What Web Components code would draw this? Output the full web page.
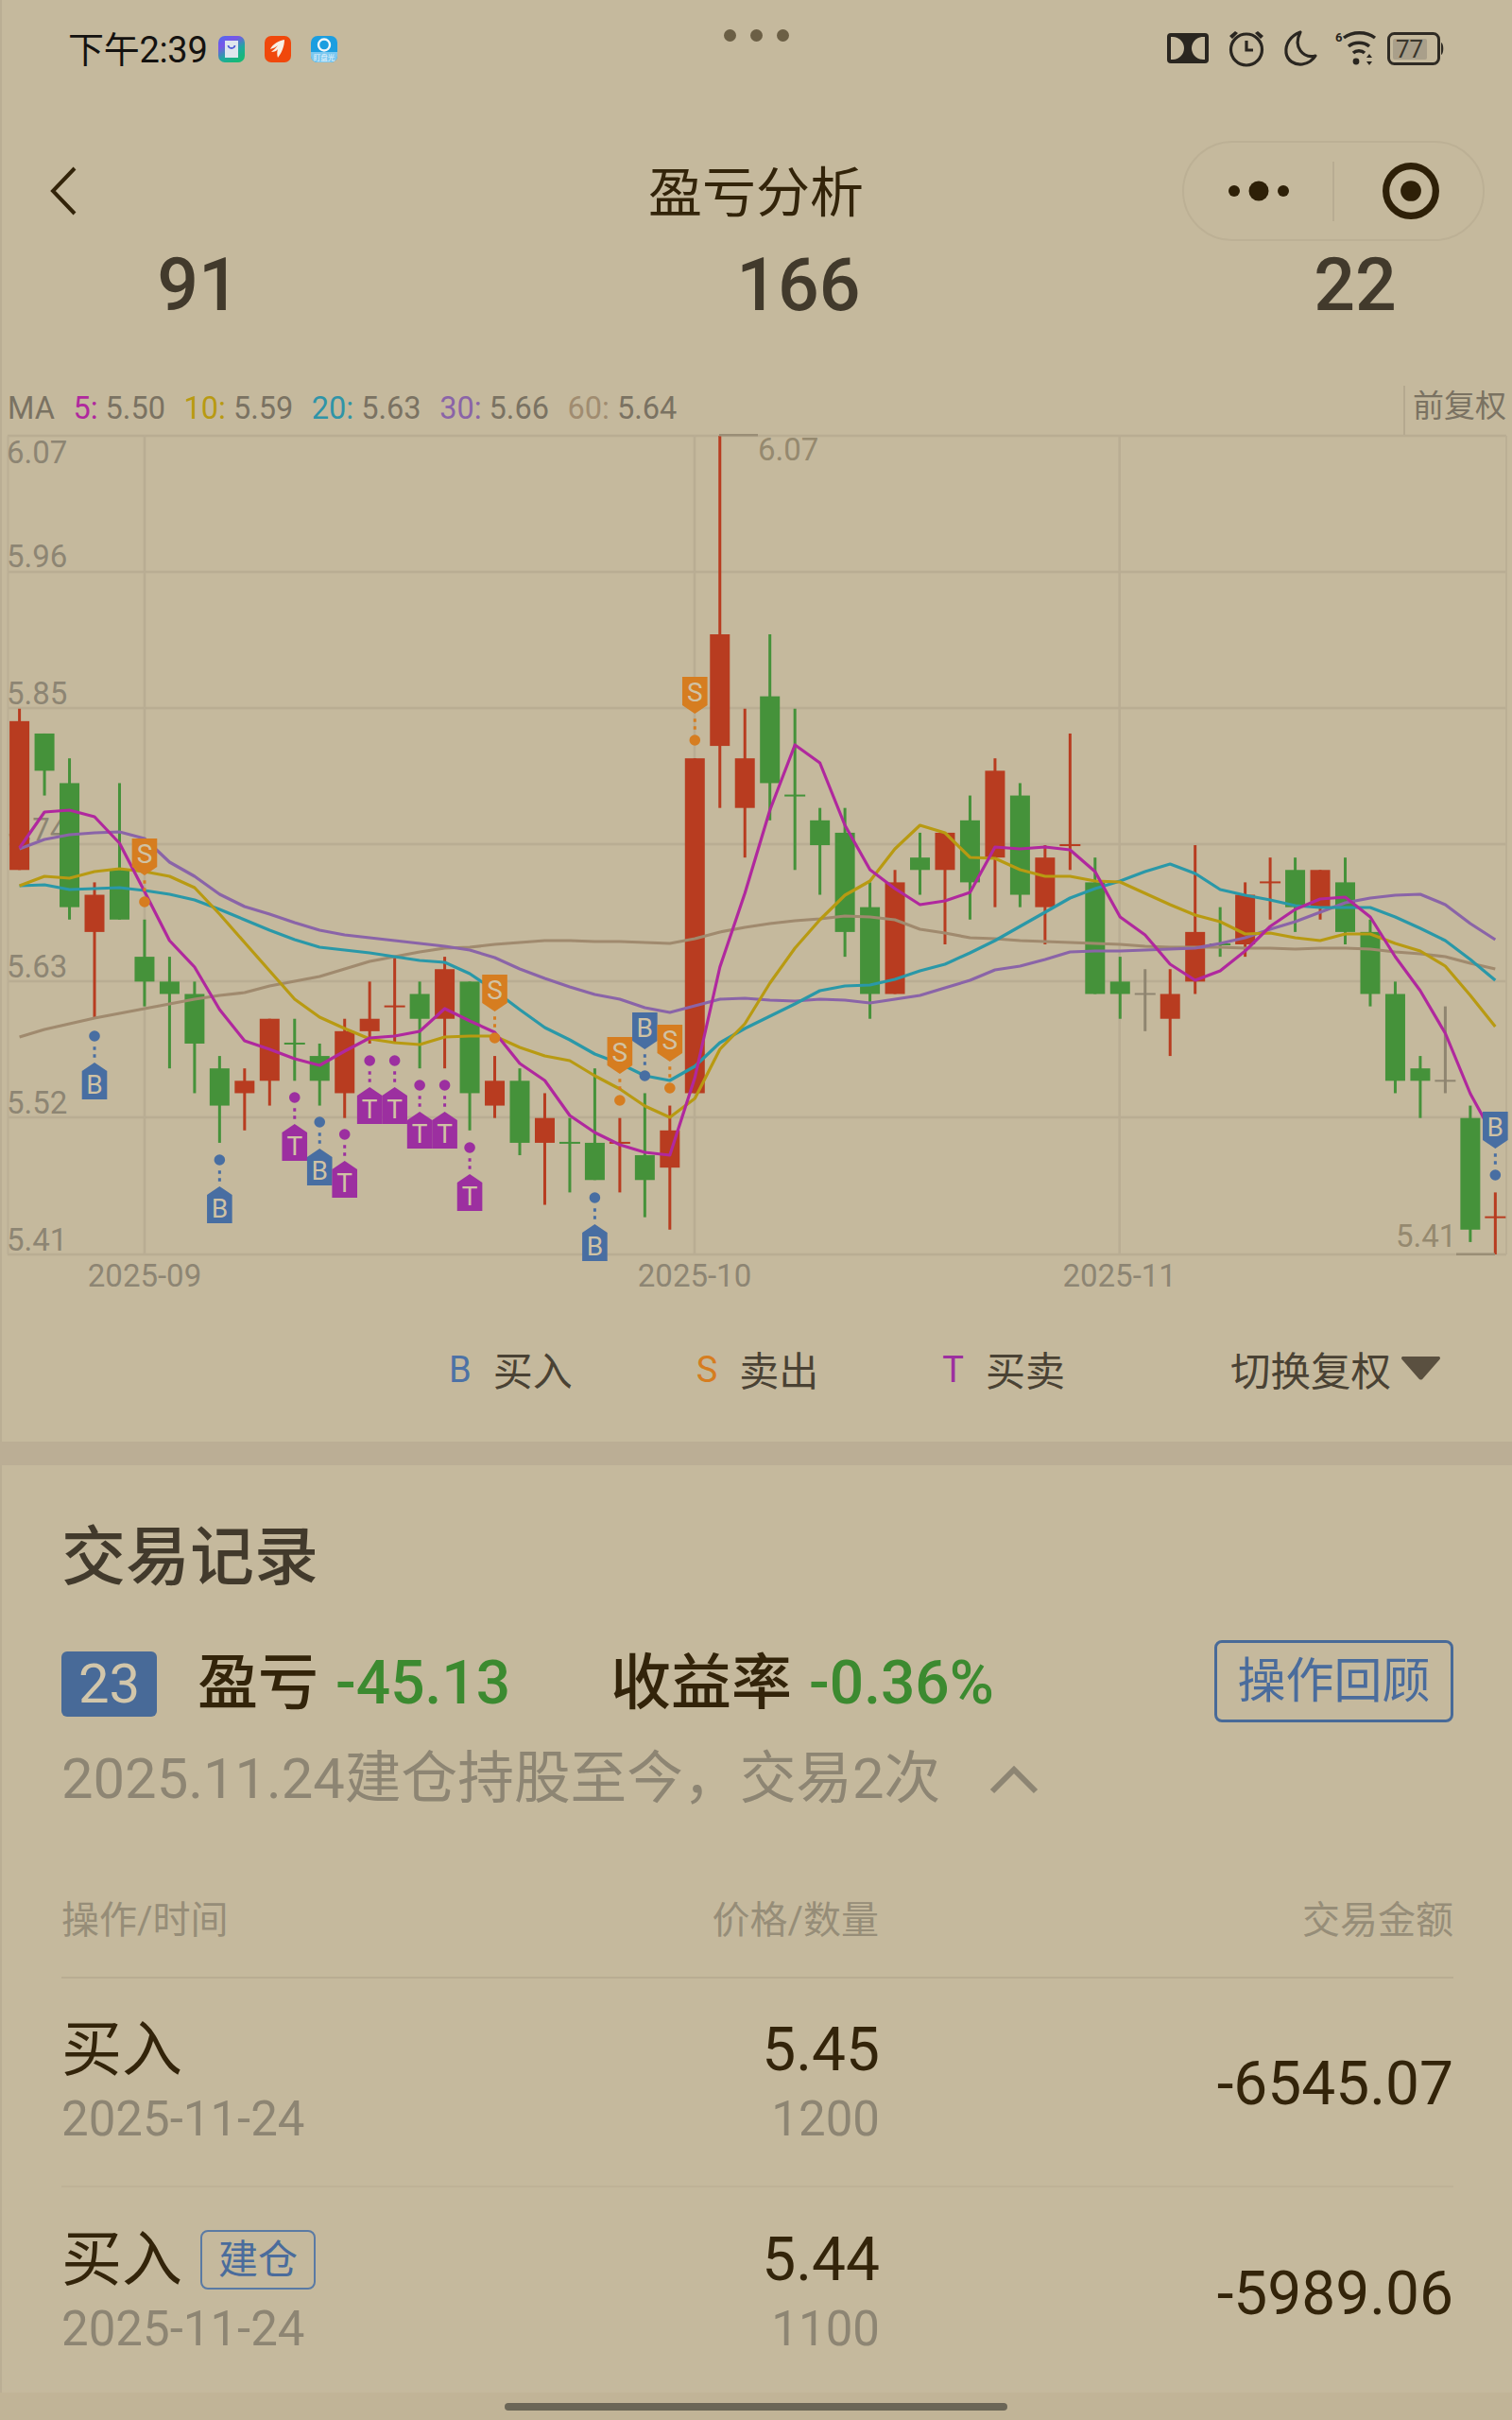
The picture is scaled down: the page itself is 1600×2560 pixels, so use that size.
<!DOCTYPE html>
<html lang="zh-CN">
<head>
<meta charset="utf-8">
<title>盈亏分析</title>
<style>
  html, body { margin: 0; padding: 0; }
  body {
    width: 1600px;
    height: 2560px;
    overflow: hidden;
    background: #c5b99d;
    font-family: Roboto, "Noto Sans CJK SC", sans-serif;
    box-shadow: inset 2px 0 0 #baae94;
  }
</style>
</head>
<body>
<status-bar></status-bar>
<nav-bar>盈亏分析</nav-bar>
<stat-row></stat-row>
<ma-legend></ma-legend>
<kline-chart></kline-chart>
<chart-legend>
  <legend-item letter="B" color="#4d72a6">买入</legend-item>
  <legend-item letter="S" color="#d67d20">卖出</legend-item>
  <legend-item letter="T" color="#9c2fa0">买卖</legend-item>
</chart-legend>
<trade-panel>
  <trade-row op="买入" date="2025-11-24" price="5.45" qty="1200" amount="-6545.07"></trade-row>
  <trade-row op="买入" tag="建仓" date="2025-11-24" price="5.44" qty="1100" amount="-5989.06" last></trade-row>
</trade-panel>
<home-bar></home-bar>

<script>
const FONT = 'Roboto, "Noto Sans CJK SC", sans-serif';

class StatusBar extends HTMLElement {
  constructor() {
    super();
    this.attachShadow({ mode: "open" });
    this.shadowRoot.innerHTML = `
      <style>
        :host { display: block; height: 130px; position: relative; font-family: ${FONT}; }
        .bar { display: grid; grid-template-columns: 1fr auto 1fr; height: 100px; padding: 0 72px 0 72px; }
        .left { display: flex; align-items: center; }
        .time { font-size: 38px; color: #141210; line-height: 100px; margin: 3px 12px 0 0; letter-spacing: -0.3px; }
        .apps { display: flex; gap: 21px; }
        .apps svg { width: 28px; height: 28px; display: block; }
        .dots { display: flex; gap: 15px; padding-top: 31px; }
        .dots i { width: 13px; height: 13px; border-radius: 50%; background: #6b5f45; display: block; }
        .right { display: flex; align-items: center; justify-content: flex-end; gap: 17px; }
        .right svg { display: block; }
      </style>
      <div class="bar">
        <div class="left">
          <span class="time">下午2:39</span>
          <div class="apps">
            <svg viewBox="0 0 28 28">
              <defs><linearGradient id="ga" x1="0" y1="0" x2="0.6" y2="1"><stop offset="0" stop-color="#4a6cf0"/><stop offset=".35" stop-color="#7a55e8"/><stop offset=".7" stop-color="#20a8a0"/><stop offset="1" stop-color="#18b878"/></linearGradient></defs>
              <rect width="28" height="28" rx="7" fill="url(#ga)"/>
              <path d="M7 5h14v18H7z" fill="#dfe6ee"/>
              <path d="M10.5 10c.5 4 6.500 4 7 0" fill="none" stroke="#5560d8" stroke-width="1.800"/>
            </svg>
            <svg viewBox="0 0 28 28">
              <rect width="28" height="28" rx="7" fill="#f0480c"/>
              <path d="M21 4C15 5 8 9 6 14c3-1 6-2 8-4-2 3-5 5-7 7 3 0 6-1 7-3-1 3-1 6 0 9 4-5 7-12 7-19z" fill="#f8efe4"/>
            </svg>
            <svg viewBox="0 0 28 28">
              <rect width="28" height="28" rx="7" fill="#1c9ee0"/>
              <path d="M0 17h28v4a7 7 0 0 1-7 7H7a7 7 0 0 1-7-7z" fill="#7cc8f0"/>
              <circle cx="14" cy="9.500" r="6" fill="none" stroke="#f2f6f8" stroke-width="2.400"/>
              <text x="14" y="26" text-anchor="middle" font-size="7.500" fill="#e8f4fa" font-family='"Noto Sans CJK SC"'>盯盘光</text>
            </svg>
          </div>
        </div>
        <div class="dots"><i></i><i></i><i></i></div>
        <div class="right">
          <svg width="44" height="32" viewBox="0 0 44 32" style="margin:-2px 0 0 1px">
            <rect width="44" height="32" rx="4" fill="#2a2620"/>
            <path d="M4 4h2c7 0 12 6 12 12s-5 12-12 12H4z" fill="#c5b99d"/>
            <path d="M40 4h-2c-7 0-12 6-12 12s5 12 12 12h2z" fill="#c5b99d"/>
          </svg>
          <svg width="40" height="40" viewBox="0 0 40 40" style="margin:-2px 0 0 3px">
            <circle cx="20" cy="21.500" r="16.500" fill="none" stroke="#2a2620" stroke-width="3.200"/>
            <path d="M20 12v10h7" fill="none" stroke="#2a2620" stroke-width="3.200"/>
            <path d="M2 7l6-5 3 2-6 6zM38 7l-6-5-3 2 6 6z" fill="#2a2620"/>
          </svg>
          <svg width="40" height="40" viewBox="0 0 40 40" style="margin:-2px 0 0 1px">
            <path d="M19 3C8 7 3 16 4 25c1 8 9 13 17 12 6-1 11-4 14-9-13 3-24-9-16-25z" fill="none" stroke="#2a2620" stroke-width="3.200" stroke-linejoin="round"/>
          </svg>
          <svg width="44" height="38" viewBox="0 0 44 38" style="margin:-2px 0 0 -1px">
            <text x="0" y="12" font-size="13" font-weight="700" fill="#2a2620" font-family="Roboto">6</text>
            <path d="M9 9c9-7 24-7 33 0" fill="none" stroke="#2a2620" stroke-width="3.400" transform="translate(0 -1)"/>
            <path d="M14 17c6-5 16-5 22 0" fill="none" stroke="#2a2620" stroke-width="3.400"/>
            <path d="M19 24c3-3 9-3 12 0" fill="none" stroke="#2a2620" stroke-width="3.400"/>
            <circle cx="22" cy="33" r="3.400" fill="#2a2620"/>
            <path d="M36 25l3 4h-6zM36 37l3-4h-6z" fill="#2a2620"/>
          </svg>
          <svg width="60" height="36" viewBox="0 0 60 36" style="margin-left:-6px">
            <rect x="1.500" y="1.500" width="53" height="32" rx="6" fill="none" stroke="#2f2b24" stroke-width="3"/>
            <rect x="6" y="7" width="36" height="22" rx="2" fill="#a99f8a"/>
            <path d="M57 11c3 1 3 12 0 13z" fill="#2f2b24"/>
            <text x="23.500" y="27" text-anchor="middle" font-size="26" fill="#3a362c" font-family="Roboto">77</text>
          </svg>
        </div>
      </div>`;
  }
}

class NavBar extends HTMLElement {
  constructor() {
    super();
    this.attachShadow({ mode: "open" });
    this.shadowRoot.innerHTML = `
      <style>
        :host { display: block; height: 144px; font-family: ${FONT}; }
        .nav { display: grid; grid-template-columns: 1fr auto 1fr; align-items: center; height: 100%; padding: 0 29px; }
        .back { display: block; margin-left: 24px; }
        .title { font-size: 57px; color: #33240a; line-height: 70px; padding-top: 5px; }
        .capsule {
          justify-self: end;
          box-sizing: border-box;
          display: grid;
          grid-template-columns: 1fr 2px 1fr;
          align-items: center;
          width: 320px;
          height: 106px;
          border: 2px solid #bcb095;
          border-radius: 53px;
        }
        .capsule .sep { height: 63px; background: #b8ac92; }
        .capsule svg { display: block; justify-self: center; }
        .capsule .target { margin-left: 5px; }
      </style>
      <div class="nav">
        <svg class="back" width="28" height="52" viewBox="0 0 28 52"><path d="M26 2L3 26l23 24" fill="none" stroke="#33240a" stroke-width="4"/></svg>
        <div class="title"><slot></slot></div>
        <div class="capsule">
          <svg width="66" height="22" viewBox="0 0 66 22"><circle cx="7" cy="11" r="6" fill="#2e2008"/><circle cx="33" cy="11" r="10.500" fill="#2e2008"/><circle cx="59" cy="11" r="6" fill="#2e2008"/></svg>
          <div class="sep"></div>
          <svg class="target" width="62" height="62" viewBox="0 0 60 60"><circle cx="30" cy="30" r="25.500" fill="none" stroke="#2e2008" stroke-width="7"/><circle cx="30" cy="30" r="10.500" fill="#2e2008"/></svg>
        </div>
      </div>`;
  }
}

class StatRow extends HTMLElement {
  constructor() {
    super();
    this.attachShadow({ mode: "open" });
    this.shadowRoot.innerHTML = `
      <style>
        :host { display: grid; grid-template-columns: 420px 850px 328px; height: 57px; margin-bottom: 69px; font-family: ${FONT}; }
        div { text-align: center; font-size: 77px; font-weight: 500; line-height: 57px; color: #423a2c; }
      </style>
      <div>91</div><div>166</div><div>22</div>`;
  }
}

class MaLegend extends HTMLElement {
  constructor() {
    super();
    this.attachShadow({ mode: "open" });
    const items = [
      ["5", "5.50", "#b0289e"],
      ["10", "5.59", "#b89a12"],
      ["20", "5.63", "#2f94a8"],
      ["30", "5.66", "#8a64a8"],
      ["60", "5.64", "#a08c70"],
    ];
    this.shadowRoot.innerHTML = `
      <style>
        :host { display: flex; box-sizing: border-box; height: 60px; padding: 4px 0 0 8px; align-items: center; gap: 19.500px; font-family: ${FONT}; font-size: 32.5px; color: #7a7262; }
        b { font-weight: 400; }
        .fq { margin-left: auto; align-self: stretch; margin-top: 4px; box-sizing: border-box; padding: 0 6px 8px 8px; border-left: 2px solid #b5a98f; line-height: 44px; font-size: 33px; }
      </style>
      <span>MA</span>
      ${items.map(([n, v, c]) => `<span><b style="color:${c}">${n}:</b> ${v}</span>`).join("")}
      <span class="fq">前复权</span>`;
  }
}

// 一分价格 = 13.12px，5.41 在 y=1327
const py = (c) => 1327 - (c - 541) * 13.12;
const cx = (i) => 20.6 + 26.47 * i;

// [上沿, 下沿, 最高, 最低, 颜色]
const CANDLES = [
  [584,572,585,572,"r"],[583,580,583,578,"g"],[579,569,581,568,"g"],[570,567,571,560,"r"],[572,568,579,568,"g"],
  [565,563,568,561,"g"],[563,562,565,556,"g"],[562,558,563,554,"g"],[556,553,557,550,"g"],[555,554,556,551,"r"],
  [560,555,560,553,"r"],[558,558,560,555,"g"],[557,555,558,553,"g"],[559,554,560,552,"r"],[560,559,563,558,"r"],
  [561,561,565,558,"r"],[562,560,563,556,"g"],[564,560,565,556,"r"],[563,554,563,551,"g"],[555,553,557,552,"r"],
  [555,550,556,549,"g"],[552,550,554,545,"r"],[550,550,552,546,"g"],[550,547,556,547,"g"],[550,550,552,546,"r"],
  [549,547,554,544,"g"],[551,548,553,543,"r"],[581,554,581,554,"r"],[591,582,607,577,"r"],[581,577,585,573,"r"],
  [586,579,591,576,"g"],[578,578,585,572,"g"],[576,574,577,570,"g"],[575,567,577,565,"g"],[569,562,571,560,"g"],
  [571,562,572,562,"r"],[573,572,575,570,"g"],[575,572,575,566,"r"],[576,571,578,568,"g"],[580,573,581,569,"r"],
  [578,570,579,569,"g"],[573,569,574,566,"r"],[574,574,583,572,"r"],[571,562,573,562,"g"],[563,562,565,560,"g"],
  [562,562,564,559,"n"],[562,560,564,557,"r"],[567,563,574,562,"r"],[566,566,569,565,"g"],[570,566,571,565,"r"],
  [571,571,573,568,"r"],[572,569,573,567,"g"],[572,569,572,568,"r"],[571,567,573,566,"g"],[567,562,568,561,"g"],
  [562,555,563,554,"g"],[556,555,557,552,"g"],[555,555,561,554,"n"],[552,543,553,542,"g"],[544,544,546,541,"r"],
];

const MA = [
  { color: "#a08a6e", ys: [1097,1089,1083,1077,1072,1067,1062,1057,1053,1050,1043,1038,1033,1025,1017,1012,1007,1003,1002,999,997,995,995,996,996,997,998,993,986,981,977,974,972,969,970,973,983,987,992,993,995,996,997,998,999,1001,1002,1002,1002,1003,1003,1004,1003,1003,1004,1007,1009,1012,1019,1025] },
  { color: "#8a64a8", ys: [898,888,883,881,880,887,912,927,946,959,967,976,984,989,992,995,998,1001,1005,1013,1025,1035,1044,1052,1057,1066,1071,1064,1057,1056,1058,1059,1057,1058,1061,1057,1053,1045,1037,1026,1022,1015,1007,1006,1006,1005,1004,1003,998,992,983,975,965,955,950,947,946,957,977,994] },
  { color: "#2a98a8", ys: [937,936,941,940,939,942,946,952,962,973,984,994,1002,1005,1008,1012,1016,1018,1030,1048,1068,1087,1100,1115,1125,1138,1143,1128,1103,1088,1075,1062,1048,1043,1042,1036,1027,1020,1008,995,980,965,950,940,932,922,914,924,941,947,952,958,960,960,960,970,982,995,1015,1037] },
  { color: "#b89a12", ys: [937,927,929,922,919,922,927,939,967,997,1027,1057,1076,1088,1099,1103,1105,1097,1096,1096,1108,1117,1122,1138,1152,1170,1182,1162,1110,1083,1040,1003,973,947,932,898,873,881,907,908,920,927,927,932,933,945,957,968,975,988,987,992,995,988,988,998,1006,1022,1053,1086] },
  { color: "#b0289e", ys: [897,859,857,864,892,943,995,1023,1068,1101,1110,1120,1127,1112,1098,1096,1091,1067,1080,1092,1125,1143,1180,1198,1211,1219,1222,1140,1023,945,857,788,807,873,920,940,957,953,944,896,898,896,899,922,970,989,1020,1037,1027,1006,980,962,951,949,970,1012,1048,1093,1157,1205] },
];

const FLAG_COLORS = { B: "#486ea2", S: "#d67d20", T: "#9c2fa0" };

// 朝下的旗：圆点在上，旗在下；朝上的旗相反
const FLAGS = [
  [3,1096,"B",1],[8,1227,"B",1],[11,1161,"T",1],[12,1187,"B",1],[13,1200,"T",1],[14,1122,"T",1],[15,1122,"T",1],
  [16,1148,"T",1],[17,1148,"T",1],[18,1214,"T",1],[23,1267,"B",1],
  [5,954,"S",-1],[19,1098,"S",-1],[24,1164,"S",-1],[25,1138,"B",-1],[26,1151,"S",-1],[27,783,"S",-1],[59,1243,"B",-1],
];

function candleSvg([top, bot, high, low, kind], i) {
  const color = { r: "#b83c20", g: "#45923a", n: "#8f8570" }[kind];
  const x = cx(i);
  let out = `<rect x="${x - 1.5}" y="${py(high)}" width="3" height="${py(low) - py(high)}" fill="${color}"/>`;
  if (top === bot) {
    out += `<rect x="${x - 11}" y="${py(top) - 1}" width="22" height="2" fill="${color}"/>`;
  } else {
    out += `<rect x="${x - 10.5}" y="${py(top)}" width="21" height="${py(bot) - py(top)}" fill="${color}"/>`;
  }
  return out;
}

function flagSvg([i, dotY, letter, dir]) {
  const x = cx(i);
  const c = FLAG_COLORS[letter];
  const at = (d) => dotY + d * dir;
  const textY = at(51) + 10;
  return `
    <circle cx="${x}" cy="${dotY}" r="5.8" fill="${c}"/>
    <rect x="${x - 1.5}" y="${at(13) - 1.75}" width="3" height="3.5" fill="${c}"/>
    <rect x="${x - 1.5}" y="${at(21) - 1.75}" width="3" height="3.5" fill="${c}"/>
    <path d="M${x} ${at(28)}L${x + 13.3} ${at(37)}V${at(67)}H${x - 13.3}V${at(37)}Z" fill="${c}"/>
    <text x="${x}" y="${textY}" text-anchor="middle" font-size="28" fill="#d0c2a4">${letter}</text>`;
}

class KlineChart extends HTMLElement {
  constructor() {
    super();
    this.attachShadow({ mode: "open" });
    const gridY = [461, 605, 749, 893, 1038, 1182, 1327];
    const gridX = [153, 735, 1184.7];
    const priceLabels = [["6.07", 490], ["5.96", 600], ["5.85", 745], ["5.74", 889], ["5.63", 1034], ["5.52", 1178], ["5.41", 1323]];
    const dateLabels = [["2025-09", 153], ["2025-10", 735], ["2025-11", 1184.7]];
    this.shadowRoot.innerHTML = `
      <style>
        :host { display: block; width: 1600px; height: 920px; font-family: ${FONT}; }
        svg { display: block; overflow: visible; font-family: ${FONT}; }
      </style>
      <svg width="1600" height="920" viewBox="0 460 1600 920">
        ${gridY.map((y) => `<rect x="8" y="${y - 1.25}" width="1586" height="2.500" fill="#b9ad93"/>`).join("")}
        ${gridX.map((x) => `<rect x="${x - 1.25}" y="461" width="2.500" height="866" fill="#b9ad93"/>`).join("")}
        <rect x="7.500" y="461" width="2" height="866" fill="#bbaf95"/>
        <rect x="1593" y="461" width="2" height="866" fill="#bbaf95"/>
        ${priceLabels.map(([t, y]) => `<text x="7" y="${y}" font-size="33" fill="#8d8573">${t}</text>`).join("")}
        ${dateLabels.map(([t, x]) => `<text x="${x}" y="1361" font-size="33" text-anchor="middle" fill="#8d8573">${t}</text>`).join("")}
        ${CANDLES.map(candleSvg).join("")}
        ${MA.map((m) => `<polyline fill="none" stroke="${m.color}" stroke-width="3.200" stroke-linejoin="round" points="${m.ys.map((y, i) => `${cx(i).toFixed(1)},${y}`).join(" ")}"/>`).join("")}
        ${FLAGS.map(flagSvg).join("")}
        <rect x="761" y="459" width="41" height="2.500" fill="#9a8e76"/>
        <text x="802" y="487" font-size="33" fill="#95896f">6.07</text>
        <rect x="1541" y="1325.500" width="41" height="2.500" fill="#9a8e76"/>
        <text x="1477" y="1319" font-size="33" fill="#95896f">5.41</text>
      </svg>`;
  }
}

class LegendItem extends HTMLElement {
  constructor() {
    super();
    this.attachShadow({ mode: "open" });
    this.shadowRoot.innerHTML = `
      <style>
        :host { display: flex; align-items: center; gap: 23px; font-size: 42px; color: #4a4234; }
        .letter { font-size: 38px; padding-top: 2px; }
      </style>
      <span class="letter" style="color:${this.getAttribute("color")}">${this.getAttribute("letter")}</span>
      <slot></slot>`;
  }
}

class ChartLegend extends HTMLElement {
  constructor() {
    super();
    this.attachShadow({ mode: "open" });
    this.shadowRoot.innerHTML = `
      <style>
        :host { display: block; height: 145px; box-sizing: border-box; padding: 0 76px 10px 475px; font-family: ${FONT}; }
        .row { display: flex; align-items: center; height: 135px; gap: 131px; }
        .switch { margin-left: auto; display: flex; align-items: center; gap: 11px; font-size: 42.500px; color: #4a4234; }
        svg { display: block; }
      </style>
      <div class="row">
        <slot></slot>
        <div class="switch">切换复权
          <svg width="41" height="25" viewBox="0 0 41 25"><path d="M2 0h37c2 0 2.500 1.500 1.500 3L23 23c-1.500 2-3.500 2-5 0L.5 3C-.5 1.500 0 0 2 0z" fill="#5a5040"/></svg>
        </div>
      </div>`;
  }
}

class TradePanel extends HTMLElement {
  constructor() {
    super();
    this.attachShadow({ mode: "open" });
    this.shadowRoot.innerHTML = `
      <style>
        :host { display: block; border-top: 25px solid #bbae95; padding: 0 62px 0 65px; height: 1006px; box-sizing: border-box; font-family: ${FONT}; }
        h2 { margin: 63px 0 50px; font-size: 68px; line-height: 70px; font-weight: 500; color: #423a2c; }
        .summary { display: flex; align-items: center; height: 90px; }
        .badge { width: 101px; height: 69px; margin-top: 6px; border-radius: 6px; background: #486a98; color: #d2c6aa; font-size: 58px; line-height: 69px; text-align: center; }
        .item { font-size: 64px; font-weight: 500; color: #33240a; white-space: nowrap; padding-bottom: 8px; }
        .item b { font-size: 64px; font-weight: 500; color: #3c8a30; margin-left: 18px; }
        .pl { margin-left: 43px; }
        .rate { margin-left: 106px; }
        .review { margin-left: auto; box-sizing: border-box; width: 253px; height: 87px; border: 3px solid #486a98; border-radius: 8px; color: #4a6c9c; font-size: 51px; line-height: 81px; text-align: center; }
        .sub { display: flex; align-items: center; height: 70px; margin-top: 18px; font-size: 59.700px; color: #8d8573; }
        .sub svg { margin: 14px 0 0 51px; display: block; }
        .head { display: grid; grid-template-columns: 400px 465px 1fr; margin-top: 91px; height: 91px; box-sizing: border-box; border-bottom: 2px solid #b9ad92; font-size: 40px; line-height: 60px; color: #968d78; }
        .head span + span { text-align: right; }
      </style>
      <h2>交易记录</h2>
      <div class="summary">
        <div class="badge">23</div>
        <div class="item pl">盈亏<b>-45.13</b></div>
        <div class="item rate">收益率<b>-0.36%</b></div>
        <div class="review">操作回顾</div>
      </div>
      <div class="sub">2025.11.24建仓持股至今，交易2次
        <svg width="54" height="30" viewBox="0 0 52 30"><path d="M3 27L26 4l23 23" fill="none" stroke="#8d8573" stroke-width="6"/></svg>
      </div>
      <div class="head"><span>操作/时间</span><span>价格/数量</span><span>交易金额</span></div>
      <slot></slot>`;
  }
}

class TradeRow extends HTMLElement {
  constructor() {
    super();
    this.attachShadow({ mode: "open" });
    const a = (n) => this.getAttribute(n);
    const tag = a("tag") ? `<span class="tag">${a("tag")}</span>` : "";
    const line = this.hasAttribute("last") ? "none" : "2px solid #bfb297";
    this.shadowRoot.innerHTML = `
      <style>
        :host { display: grid; grid-template-columns: 400px 466px 1fr; align-items: center; height: 221px; padding-top: 4px; box-sizing: border-box; border-bottom: ${line}; }
        .top { display: flex; align-items: center; font-size: 64px; line-height: 73px; color: #33240a; }
        .bot { font-size: 51px; line-height: 73px; color: #8d8573; }
        .tag { box-sizing: border-box; width: 122px; height: 63px; margin-left: 19px; border: 2px solid #5a7aa4; border-radius: 8px; font-size: 42px; line-height: 59px; text-align: center; color: #4a6c9c; }
        .right { text-align: right; }
        .top.right { justify-content: flex-end; }
        .amount { font-size: 64px; color: #33240a; text-align: right; }
      </style>
      <div><div class="top">${a("op")}${tag}</div><div class="bot">${a("date")}</div></div>
      <div><div class="top right">${a("price")}</div><div class="bot right">${a("qty")}</div></div>
      <div class="amount">${a("amount")}</div>`;
  }
}

class HomeBar extends HTMLElement {
  constructor() {
    super();
    this.attachShadow({ mode: "open" });
    this.shadowRoot.innerHTML = `
      <style>
        :host { display: flex; justify-content: center; height: 29px; box-sizing: border-box; padding-top: 11px; background: #c1b497; }
        i { display: block; width: 532px; height: 8px; border-radius: 4px; background: #6b6657; }
      </style>
      <i></i>`;
  }
}

customElements.define("status-bar", StatusBar);
customElements.define("nav-bar", NavBar);
customElements.define("stat-row", StatRow);
customElements.define("ma-legend", MaLegend);
customElements.define("kline-chart", KlineChart);
customElements.define("legend-item", LegendItem);
customElements.define("chart-legend", ChartLegend);
customElements.define("trade-panel", TradePanel);
customElements.define("trade-row", TradeRow);
customElements.define("home-bar", HomeBar);
</script>
</body>
</html>
